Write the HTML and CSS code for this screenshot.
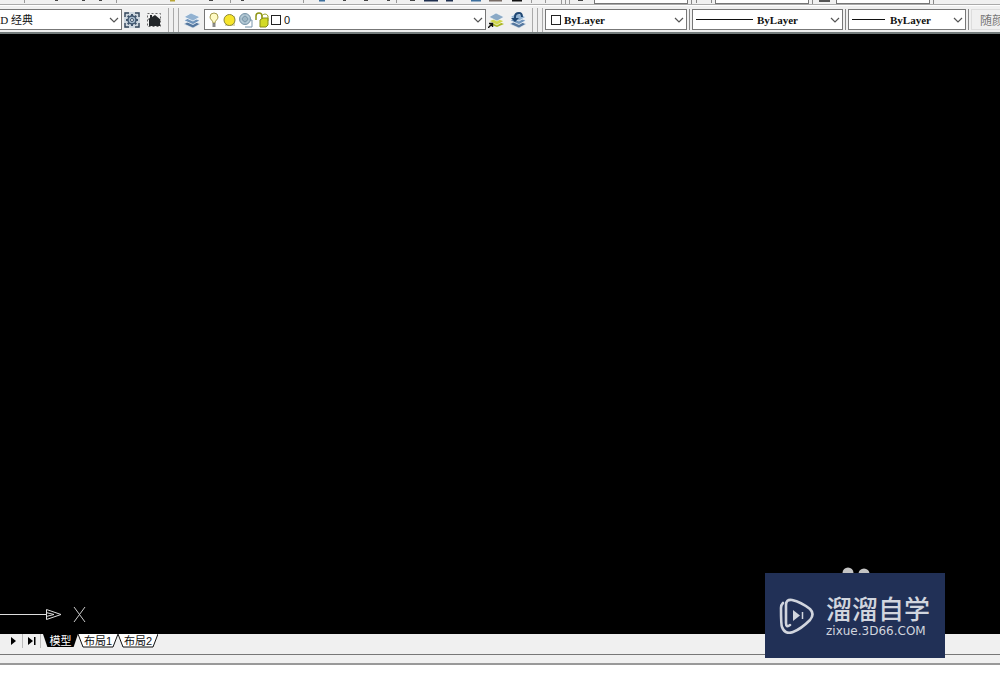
FILE: index.html
```
<!DOCTYPE html>
<html lang="zh-CN">
<head>
<meta charset="utf-8">
<title>AutoCAD 经典</title>
<link rel="stylesheet" href="styles.css">
</head>
<body>
<svg class="defs" aria-hidden="true">
  <symbol id="chevron" viewBox="0 0 10 6"><path d="M1 1l4 4 4-4" fill="none" stroke="#555" stroke-width="1.2"/></symbol>
  <symbol id="layers" viewBox="0 0 16 16">
    <path d="M0 12l7-4 9 4-7 4z" fill="#54779f" stroke="#e8eef4" stroke-width=".6"/>
    <path d="M0 8.500l7-4 9 4-7 4z" fill="#6f94bb" stroke="#f4f7fa" stroke-width=".8"/>
    <path d="M0 5l7-4 9 4-7 4z" fill="#92b2d1" stroke="#f4f7fa" stroke-width=".8"/>
  </symbol>
</svg>
<header class="toolbars">
  <div class="upper">
    <svg class="bits" width="594" height="5" aria-hidden="true">
      <path d="M24.500 0v3M116.500 0v3M230.500 0v3M303.500 0v3M396.500 0v3M531.500 0v3M545.500 0v3M561.500 0v4M565.500 0v4M569.500 0v4" stroke="#999"/>
      <path d="M55 0h3M82 0h3M99 0h3M209 0h4M241 0h3M343 0h3M364 0h4M387 0h3M410 0h5M578 0h5" stroke="#444" stroke-width="2"/>
      <path d="M170 0h5" stroke="#b8a535" stroke-width="3"/>
      <path d="M319 0h6M471 0h10" stroke="#3d6f9d" stroke-width="3"/>
      <path d="M424 0h14M446 0h7" stroke="#1f2f4f" stroke-width="3"/>
      <path d="M489 0h13" stroke="#776b65" stroke-width="3"/><path d="M512 0h10" stroke="#111" stroke-width="3"/>
    </svg>
    <span class="stub"></span>
    <svg class="gap" viewBox="0 0 27 4" aria-hidden="true"><path d="M3.500 0v4M8.500 0v3M23.500 0v3" stroke="#888"/></svg>
    <span class="stub"></span>
    <svg class="gap" viewBox="0 0 27 4" aria-hidden="true"><path d="M3.500 0v4" stroke="#888"/><path d="M10 1h11" stroke="#555" stroke-width="2"/></svg>
    <span class="stub"></span>
    <svg class="gap" viewBox="0 0 27 4" aria-hidden="true"><path d="M3.500 0v4" stroke="#888"/></svg>
  </div>
  <div class="main">
    <div class="combo workspace">
      <select aria-label="工作空间"><option>AutoCAD 经典</option></select>
      <svg class="arrow"><use href="#chevron"/></svg>
    </div>
    <div class="icons">
      <button aria-label="工作空间设置"><svg viewBox="0 0 16 16">
        <rect width="16" height="16" fill="#cfd8e0"/>
        <path d="M1 5V1h4M11 1h4v4M15 11v4h-4M5 15H1v-4" fill="none" stroke="#34465a" stroke-width="1.4"/>
        <path d="M8 2v12M2 8h12M3.700 3.700l8.600 8.600M12.300 3.700l-8.600 8.600" stroke="#40566e" stroke-width="2"/>
        <circle cx="8" cy="8" r="4" fill="#a9bccd" stroke="#40566e" stroke-width="1.400"/><circle cx="8" cy="8" r="1.500" fill="#fff" stroke="#40566e"/>
      </svg></button>
      <button aria-label="我的工作空间"><svg viewBox="0 0 16 16">
        <path d="M1.500 1.500h13v13h-13z" fill="none" stroke="#666" stroke-dasharray="2 2"/>
        <path d="M2 7l2-1V3h2v2l3-2 6 5h-1v6H3V8z" fill="#222629"/>
      </svg></button>
    </div>
    <div class="grip"></div>
    <button aria-label="图层特性管理器"><svg viewBox="0 0 16 16"><use href="#layers"/></svg></button>
    <div class="combo layer">
      <select aria-label="图层"><option>0</option></select>
      <svg class="state" viewBox="0 0 74 16" aria-hidden="true">
        <path d="M5 11C5 8 2 8 2 5a4 4 0 018 0c0 3-3 3-3 6z" fill="#fffbc4" stroke="#a49a4c"/><path d="M4.500 12h3M4.500 14h3" stroke="#666" stroke-width="1.300"/>
        <rect x="17" y="4" width="10" height="10" fill="#d8d5b8"/><circle cx="21.500" cy="8" r="5.500" fill="#f7e52b" stroke="#8c8738"/>
        <path d="M38 8h6v7h-7" fill="#fff" stroke="#7895ab"/><circle cx="37" cy="7" r="5.500" fill="#b5cad6" stroke="#718fa3"/><circle cx="37" cy="7" r="2.500" fill="none" stroke="#718fa3"/><path d="M37 1v12M31 7h12" stroke="#8ca6b7" stroke-width=".7"/>
        <path d="M48 8V4q0-3 3-3t3 3v3" fill="none" stroke="#8d9413" stroke-width="1.500"/><path d="M52 8l3-2h5v7l-2 2h-6z" fill="#d3da24" stroke="#858c19"/><path d="M54 6V4q1-2 3-2t3 2v5" fill="none" stroke="#9ba321"/>
        <rect x="63.500" y="3.500" width="9" height="9" fill="#fff" stroke="#222"/>
      </svg>
      <svg class="arrow"><use href="#chevron"/></svg>
    </div>
    <div class="icons">
      <button aria-label="将对象的图层置为当前"><svg viewBox="0 0 16 16">
        <path d="M1 12l7-3 8 3-7 3z" fill="#a9b51f"/><path d="M1 9l7-3 8 3-7 4z" fill="#d0d64c" stroke="#fff" stroke-width=".6"/><path d="M1 5l7-4 8 4-7 4z" fill="#8aa9c6" stroke="#fff" stroke-width=".6"/>
        <path d="M0 16l4-4M1 11.500h3.500V15" fill="none" stroke="#111" stroke-width="1.400"/>
      </svg></button>
      <button aria-label="上一个图层"><svg viewBox="0 0 16 16"><use href="#layers"/>
        <path d="M5 8V5q0-4 4-4 3 0 3 4" fill="none" stroke="#1f4773" stroke-width="2"/><path d="M1 6h8L5 10z" fill="#1f4773"/>
      </svg></button>
    </div>
    <div class="grip"></div>
    <div class="combo color">
      <select aria-label="颜色"><option>ByLayer</option></select>
      <span class="swatch"></span>
      <svg class="arrow"><use href="#chevron"/></svg>
    </div>
    <div class="rule"></div>
    <div class="combo linetype">
      <select aria-label="线型"><option>ByLayer</option></select>
      <span class="sample"></span>
      <svg class="arrow"><use href="#chevron"/></svg>
    </div>
    <div class="rule"></div>
    <div class="combo weight">
      <select aria-label="线宽"><option>ByLayer</option></select>
      <span class="sample"></span>
      <svg class="arrow"><use href="#chevron"/></svg>
    </div>
    <div class="rule"></div>
    <button class="plot" disabled>随颜色</button>
  </div>
</header>
<main class="canvas">
  <svg class="ucs" viewBox="0 0 90 20" aria-hidden="true">
    <path d="M0 9.500h46M46.500 4.500v10L61 9.500zM46 7.500l8 2-8 2" fill="none" stroke="#ddd"/>
    <path d="M74 2l11 15M85 2L74 17" stroke="#ccc"/>
  </svg>
</main>
<footer>
  <nav class="tabs">
    <button class="step" aria-label="下一个"><svg viewBox="0 0 10 10"><path d="M3 1l5 4-5 4z"/></svg></button>
    <button class="step last" aria-label="最后一个"><svg viewBox="0 0 10 10"><path d="M1 1l5 4-5 4zM7 1h1.500v8H7z"/></svg></button>
    <button class="tab active"><svg viewBox="0 0 40 14" preserveAspectRatio="none"><path d="M0 0l5 13h30l5-13z" fill="#000"/></svg><span>模型</span></button>
    <button class="tab"><svg viewBox="0 0 40 14" preserveAspectRatio="none"><path d="M0 0l5 13h30l5-13" fill="#fff" stroke="#111"/></svg><span>布局1</span></button>
    <button class="tab"><svg viewBox="0 0 40 14" preserveAspectRatio="none"><path d="M0 0l5 13h30l5-13" fill="#fff" stroke="#111"/></svg><span>布局2</span></button>
  </nav>
  <div class="command"></div>
</footer>
<aside class="brand">
  <svg class="ears" viewBox="0 0 28 6" aria-hidden="true"><circle cx="6" cy="6" r="5.500"/><circle cx="22" cy="7" r="5.500"/></svg>
  <svg class="logo" viewBox="0 0 36 36" aria-hidden="true">
    <path d="M11 27Q7 30 7 25V7Q7 1 13 2Q22 4 31 11Q36 16 31 22Q22 31 14 34Q6 37 3 29Q2 27 2 10Q2 7 4 5" fill="none" stroke="#d1d5de" stroke-width="2.600" stroke-linecap="round"/>
    <path d="M14 12l7 5.500-7 5.500z" fill="#d1d5de"/><path d="M23.500 14v7" stroke="#d1d5de" stroke-width="1.500"/>
  </svg>
  <div class="words"><strong>溜溜自学</strong><span>zixue.3D66.COM</span></div>
</aside>
</body>
</html>
```
FILE: styles.css
```
* { box-sizing: border-box; }
body {
  margin: 0;
  min-height: 100vh;
  display: flex;
  flex-direction: column;
  position: relative;
  overflow-x: hidden;
  background: #fff;
  color: #111;
  font: 11px "Liberation Serif", "Noto Sans CJK SC", serif;
}
.defs { position: absolute; width: 0; height: 0; }
button { padding: 0; border: 0; background: none; font: inherit; color: inherit; }
svg { display: block; }

.toolbars { background: #f0f0f0; border-bottom: 2px solid #747c7c; overflow: hidden; }
.upper { display: flex; height: 5px; border-bottom: 1px solid #aaa; }
.bits { flex: none; width: 594px; }
.stub { flex: none; width: 94px; height: 4px; background: #fff; border: 1px solid #777; border-top: 0; }
.gap { flex: none; width: 27px; height: 4px; }
.main { display: flex; align-items: center; height: 27px; padding-top: 1px; border-top: 1px solid #fff; }
.main > * { flex: none; }
.main button svg { width: 16px; height: 16px; }
.combo { position: relative; height: 21px; }
.combo select {
  appearance: none;
  display: block;
  width: 100%;
  height: 100%;
  margin: 0;
  padding: 0 20px 0 18px;
  border: 1px solid #777;
  border-radius: 0;
  background: #fff;
  color: #111;
  font: inherit;
  font-weight: 600;
}
.arrow { position: absolute; right: 3px; top: 8px; width: 10px; height: 6px; pointer-events: none; }
.workspace { width: 170px; margin-left: -48px; }
.workspace select { padding-left: 10px; font-weight: 400; }
.icons { display: flex; gap: 6px; height: 24px; align-items: center; padding: 0 6px 0 2px; border-right: 1px solid #aaa; }
.grip { width: 6px; height: 24px; margin: 0 5px 0 4px; border: solid #aaa; border-width: 0 1px; }
.grip + .combo { margin-left: -3px; }
.layer { width: 282px; margin-left: 4px; }
.layer select { padding-left: 79px; font-family: "Liberation Sans", sans-serif; font-weight: 400; }
.state { position: absolute; left: 4px; top: 3px; width: 74px; height: 16px; pointer-events: none; }
.color { width: 142px; }
.swatch { position: absolute; left: 6px; top: 6px; width: 10px; height: 10px; border: 1px solid #222; pointer-events: none; }
.rule { width: 1px; height: 21px; margin: 0 2px; background: #888; }
.linetype { width: 151px; }
.linetype select { padding-left: 64px; }
.weight { width: 118px; }
.weight select { padding-left: 41px; }
.sample { position: absolute; left: 4px; top: 10px; height: 1px; background: #111; pointer-events: none; }
.linetype .sample { width: 57px; }
.weight .sample { width: 33px; }
.plot { height: 21px; padding-left: 8px; border: 1px solid #ddd; color: #777; font-size: 12px; }

.canvas { flex: 1; display: flex; align-items: flex-end; min-height: 100px; padding-bottom: 9px; background: #000; }
.ucs { width: 90px; height: 20px; }

.tabs { display: flex; height: 21px; background: #f0f0f0; border-bottom: 1px solid #777; }
.step { width: 18px; height: 14px; padding-left: 4px; border-right: 1px solid #bbb; }
.step:first-child { width: 23px; padding-left: 8px; }
.step svg { width: 10px; height: 10px; }
.last { margin-right: 2px; }
.tab {
  position: relative;
  width: 40px;
  height: 14px;
  line-height: 14px;
  text-align: center;
  font-family: "Liberation Sans", "Noto Sans CJK SC", sans-serif;
  white-space: nowrap;
}
.tab svg { position: absolute; left: 0; top: 0; width: 100%; height: 100%; }
.tab span { position: relative; }
.tab.active { width: 35px; color: #fff; }
.command { height: 10px; margin-bottom: 10px; background: #f0f0f0; border-bottom: 2px solid #999; }

.brand {
  position: absolute;
  right: 55px;
  bottom: 17px;
  display: flex;
  align-items: center;
  gap: 11px;
  width: 180px;
  height: 85px;
  padding-left: 14px;
  background: #213056;
  color: #d1d5de;
}
.logo { width: 36px; height: 36px; }
.ears { position: absolute; left: 77px; top: -6px; width: 28px; height: 6px; fill: #c4c4c4; }
.words { display: flex; flex-direction: column; gap: 4px; font-family: "Noto Sans CJK SC", sans-serif; white-space: nowrap; }
.words strong { font-size: 26px; line-height: 26px; font-weight: 500; }
.words span { font: 12px/12px "DejaVu Sans", sans-serif; }
```
